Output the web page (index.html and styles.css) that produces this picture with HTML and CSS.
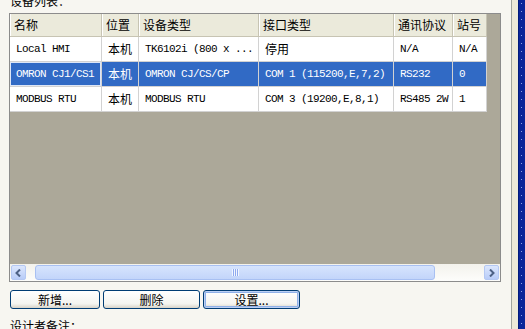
FILE: index.html
```html
<!DOCTYPE html>
<html lang="zh-CN">
<head>
    <meta charset="UTF-8">
    <title>设备列表</title>
    <link rel="stylesheet" href="styles.css">
</head>
<body>
    <div class="window">
        <div class="page">
            <div class="caption caption-top">设备列表：</div>

            <div class="listview">
                <div class="list-area">
                    <table class="devices">
                        <thead>
                            <tr>
                                <th class="c1">名称</th>
                                <th class="c2">位置</th>
                                <th class="c3">设备类型</th>
                                <th class="c4">接口类型</th>
                                <th class="c5">通讯协议</th>
                                <th class="c6">站号</th>
                            </tr>
                        </thead>
                        <tbody>
                            <tr>
                                <td class="mono">Local HMI</td>
                                <td>本机</td>
                                <td class="mono">TK6102i (800 x ...</td>
                                <td>停用</td>
                                <td class="mono">N/A</td>
                                <td class="mono">N/A</td>
                            </tr>
                            <tr class="selected">
                                <td class="mono focus">OMRON CJ1/CS1</td>
                                <td>本机</td>
                                <td class="mono">OMRON CJ/CS/CP</td>
                                <td class="mono">COM 1 (115200,E,7,2)</td>
                                <td class="mono">RS232</td>
                                <td class="mono">0</td>
                            </tr>
                            <tr>
                                <td class="mono">MODBUS RTU</td>
                                <td>本机</td>
                                <td class="mono">MODBUS RTU</td>
                                <td class="mono">COM 3 (19200,E,8,1)</td>
                                <td class="mono">RS485 2W</td>
                                <td class="mono">1</td>
                            </tr>
                        </tbody>
                    </table>
                </div>

                <div class="hscroll">
                    <span class="scroll-btn">
                        <svg width="7" height="8" viewBox="0 0 7 8"><path d="M5 0.5 L1.5 4 L5 7.5" fill="none" stroke="#4d6185" stroke-width="2"/></svg>
                    </span>
                    <span class="thumb"><span class="grip"></span></span>
                    <span class="scroll-btn">
                        <svg width="7" height="8" viewBox="0 0 7 8"><path d="M2 0.5 L5.5 4 L2 7.5" fill="none" stroke="#4d6185" stroke-width="2"/></svg>
                    </span>
                </div>
            </div>

            <div class="buttons">
                <button class="btn btn-add">新增...</button>
                <button class="btn btn-del">删除</button>
                <button class="btn btn-set default">设置...</button>
            </div>

            <div class="caption caption-notes">设计者备注：</div>
        </div>
        <div class="side-gap"></div>
        <div class="side-frame"></div>
    </div>
</body>
</html>
```

FILE: styles.css
```css
:root {
    --page-bg: #f7f6f1;
    --dialog-bg: #ece9d8;
    --list-empty: #aca899;
    --grid-line: #d2d2d2;
    --select-blue: #316ac5;
    --cjk: "Noto Sans CJK SC", "Noto Sans", sans-serif;
    --mono: "Liberation Mono", "Noto Sans CJK SC", monospace;
}

body {
    margin: 0;
    width: 525px;
    height: 329px;
    overflow: hidden;
    background-color: var(--dialog-bg);
    font-family: var(--cjk);
    font-size: 12px;
    color: #000000;
}

.window {
    display: flex;
    height: 329px;
}

.page {
    width: 513px;
    box-sizing: border-box;
    padding-left: 9px;
    background-color: var(--page-bg);
    border-right: 1px solid #a0a49e;
    overflow: hidden;
}

.side-gap {
    width: 6px;
    background-color: var(--dialog-bg);
}

.side-frame {
    width: 6px;
    background-color: #0b2599;
    background-image: repeating-linear-gradient(to bottom, #8ea4ea 0 1px, transparent 1px 8px);
    background-size: 1px 100%;
    background-position: 2px 3px;
    background-repeat: no-repeat;
    border-left: 1px solid #001a7c;
}

.caption {
    line-height: 14px;
    padding-left: 1px;
}

.caption-top {
    margin-top: -6px;
}

.caption-notes {
    margin-top: 10px;
}

/* list view */

.listview {
    width: 492px;
    height: 269px;
    box-sizing: border-box;
    margin-top: 5px;
    border: 1px solid #8c8c8c;
    display: flex;
    flex-direction: column;
}

.list-area {
    flex: 1;
    background-color: var(--list-empty);
    overflow: hidden;
}

.devices {
    border-spacing: 0;
    table-layout: fixed;
    width: 477px;
}

.devices th,
.devices td {
    box-sizing: border-box;
    white-space: nowrap;
    overflow: hidden;
    text-align: left;
}

.devices th {
    height: 23px;
    line-height: 22px;
    padding: 0 4px;
    font-weight: normal;
    background-color: #ebeadb;
    border-right: 1px solid #c7c4b3;
    border-bottom: 1px solid #c7c4b3;
    box-shadow: inset 1px 0 0 #ffffff;
}

.c1 { width: 92px; }
.c2 { width: 37px; }
.c3 { width: 120px; }
.c4 { width: 135px; }
.c5 { width: 59px; }
.c6 { width: 34px; }

.devices td {
    height: 25px;
    line-height: 24px;
    padding: 0 5px 0 6px;
    background-color: #ffffff;
    border-right: 1px solid var(--grid-line);
    border-bottom: 1px solid var(--grid-line);
}

.devices td.mono {
    font-family: var(--mono);
    font-size: 11px;
    letter-spacing: -0.6px;
}

.devices tr.selected td {
    background-color: var(--select-blue);
    color: #ffffff;
}

.devices td.focus {
    box-shadow: inset 0 0 0 1px #dde6f7;
}

/* horizontal scrollbar */

.hscroll {
    height: 17px;
    display: flex;
    align-items: center;
    padding: 0 1px;
    background: linear-gradient(#f3f2ec, #fdfdfb);
}

.scroll-btn {
    width: 15px;
    height: 15px;
    box-sizing: border-box;
    border: 1px solid #b4c8f3;
    border-radius: 2px;
    background: linear-gradient(#dce7fd, #b8ccf8);
    display: flex;
    align-items: center;
    justify-content: center;
}

.thumb {
    width: 400px;
    height: 15px;
    box-sizing: border-box;
    margin: 0 auto 0 9px;
    border: 1px solid #a8c0f2;
    border-radius: 3px;
    background: linear-gradient(#d6e4fd, #c3d5fa);
    display: flex;
    align-items: center;
    justify-content: center;
}

.grip {
    width: 7px;
    height: 7px;
    background-image: repeating-linear-gradient(90deg, #f2f6fe 0 1px, #8eaaf0 1px 2px);
}

/* buttons */

.buttons {
    display: flex;
    gap: 3px;
    margin-top: 8px;
    padding-left: 1px;
}

.btn {
    height: 19px;
    padding: 0;
    box-sizing: border-box;
    border: 1px solid #003c74;
    border-radius: 3px;
    background: linear-gradient(#ffffff, #f4f4f0 75%, #d8d3c8);
    font-family: var(--cjk);
    font-size: 12px;
    line-height: 15px;
    color: #000000;
}

.btn-add { width: 90px; }
.btn-del { width: 97px; }
.btn-set { width: 97px; }

.btn.default {
    box-shadow: inset 0 0 0 1px #bcd0f4, inset 0 0 0 2px #8fb0e8;
}
```
